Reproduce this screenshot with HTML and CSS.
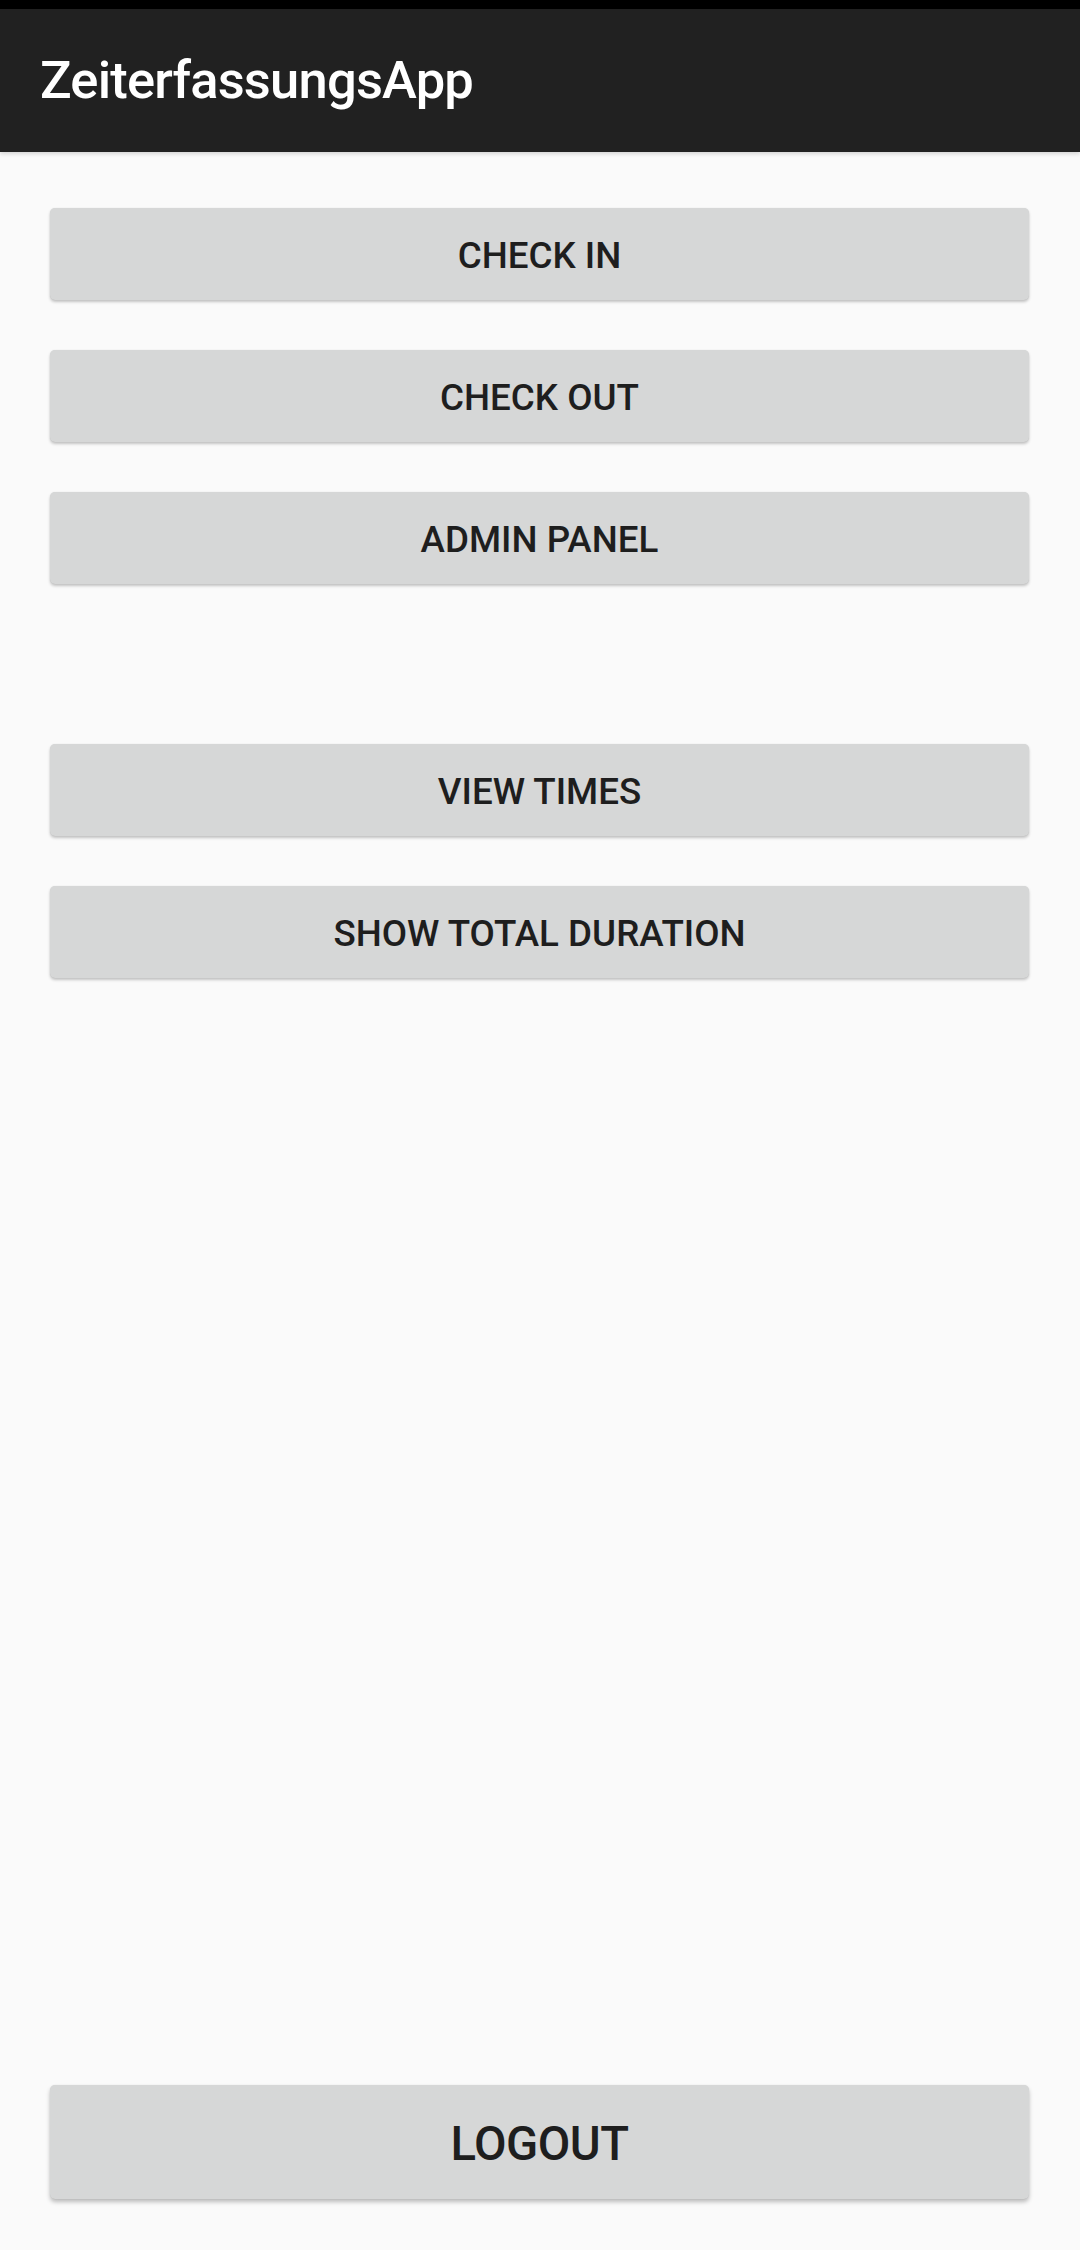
FILE: index.html
```html
<!DOCTYPE html>
<html lang="de">
<head>
<meta charset="utf-8">
<title>ZeiterfassungsApp</title>
<link rel="stylesheet" href="styles.css">
</head>
<body>
<div class="screen">
  <div class="status"></div>
  <header class="toolbar"><h1 class="title">ZeiterfassungsApp</h1></header>
  <main class="content">
    <button class="btn">CHECK IN</button>
    <button class="btn">CHECK OUT</button>
    <button class="btn">ADMIN PANEL</button>
    <div class="spacer"></div>
    <button class="btn">VIEW TIMES</button>
    <button class="btn">SHOW TOTAL DURATION</button>
    <button class="btn btn-logout">LOGOUT</button>
  </main>
</div>
</body>
</html>
```
FILE: styles.css
```css
* { box-sizing: border-box; }
html, body { margin: 0; padding: 0; }
body {
  width: 1080px;
  height: 2250px;
  background: #fafafa;
  font-family: Roboto, "Noto Sans", sans-serif;
  overflow: hidden;
}
.screen {
  height: 2250px;
  display: flex;
  flex-direction: column;
}
.status {
  height: 9px;
  background: #000;
  flex: none;
}
.toolbar {
  height: 143px;
  background: #212121;
  display: flex;
  align-items: center;
  padding-left: 40px;
  flex: none;
  box-shadow: 0 2px 4px rgba(0,0,0,0.15);
  position: relative;
  z-index: 1;
}
.title {
  margin: 0;
  color: #fff;
  font-size: 52.5px;
  font-weight: 500;
  letter-spacing: -0.8px;
  line-height: 1;
}
.content {
  flex: 1;
  display: flex;
  flex-direction: column;
  padding: 56px 51px 51px 50px;
  gap: 50px;
}
.btn {
  height: 92px;
  width: 979px;
  flex: none;
  border: none;
  border-radius: 5px;
  background: #d6d7d7;
  color: #1e1e1e;
  font-family: Roboto, "Noto Sans", sans-serif;
  font-size: 36.75px;
  font-weight: 500;
  letter-spacing: 0;
  box-shadow: 0 2px 3px rgba(0,0,0,0.22), 0 0 1px rgba(0,0,0,0.12);
  padding: 2px 0 0;
}
.spacer {
  height: 60px;
  flex: none;
}
.btn-logout {
  margin-top: auto;
  height: 114px;
  font-size: 47.25px;
  letter-spacing: -0.5px;
  padding-top: 4px;
  box-shadow: 0 3px 4px rgba(0,0,0,0.25), 0 0 1px rgba(0,0,0,0.12);
}
```
